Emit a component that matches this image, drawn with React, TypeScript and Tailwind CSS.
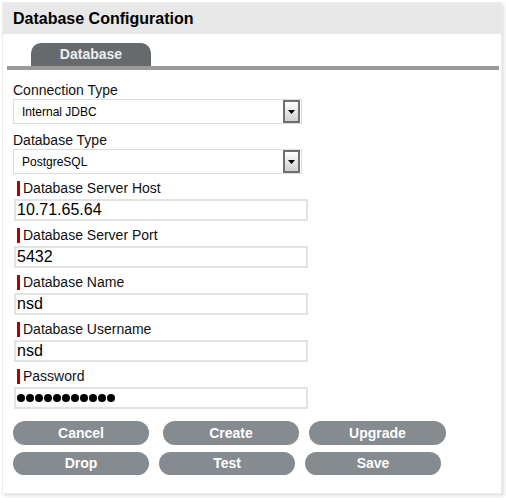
import React from 'react';

const font = { fontFamily: '"Liberation Sans", Arial, sans-serif' };

const SelectBox: React.FC<{ value: string }> = ({ value }) => (
  <div className="ml-[13px] flex h-[25px] w-[289px] items-center border border-[#dcdcdc] bg-white">
    <span className="flex-1 pl-[8px] text-[12px] text-black">{value}</span>
    <div className="mr-[1px] flex h-[23px] w-[17px] items-center justify-center border-2 border-[#6f6f6f] bg-gradient-to-b from-white to-[#cfcfcf]">
      <svg width="7" height="4" viewBox="0 0 7 4">
        <path d="M0 0h7L3.5 4z" fill="#000" />
      </svg>
    </div>
  </div>
);

const Field: React.FC<{ label: string; value: string; password?: boolean }> = ({ label, value, password }) => (
  <div className="pt-[7px]">
    <div className="ml-[17px] flex h-[14px] items-center">
      <span className="h-[15px] w-[3px] bg-[#b80000]" />
      <span className="ml-[3px] text-[14px] leading-[14px] text-[#111]">{label}</span>
    </div>
    <div className="ml-[14px] mt-[4px] flex h-[22px] w-[294px] items-center border-2 border-[#e3e3e3] bg-white pl-[1px]">
      {password ? (
        <span className="flex gap-[1px]">
          {Array.from({ length: 11 }).map((_, i) => (
            <span key={i} className="inline-block h-[8px] w-[8px] rounded-full bg-black" />
          ))}
        </span>
      ) : (
        <span className="text-[16px] leading-none text-black">{value}</span>
      )}
    </div>
  </div>
);

const Btn: React.FC<{ label: string; className?: string }> = ({ label, className = '' }) => (
  <button
    className={`flex w-[136px] items-center justify-center rounded-full bg-[#858b8f] text-[14px] font-bold text-white ${className}`}
  >
    {label}
  </button>
);

export default function App() {
  return (
    <div className="h-[498px] w-[506px] bg-white pl-[2px] pt-[2px]" style={font}>
      <div className="h-[492px] w-[500px] border border-[#ececec] bg-white shadow-[2px_2px_3px_rgba(0,0,0,0.12)]">
        <div className="flex h-[31px] items-center bg-[#e8e8e8] pl-[10px]">
          <h1 className="text-[16px] font-bold text-black">Database Configuration</h1>
        </div>

        <div className="mt-[9px] pl-[28px]">
          <div className="flex h-[23px] w-[120px] items-center justify-center rounded-t-[10px] bg-[#676a6d] text-[14px] font-bold text-[#eeeeee]">
            Database
          </div>
        </div>
        <div className="ml-[4px] mr-[2px] h-[4px] bg-[#9a9a9a]" />

        <div className="ml-[10px] mt-[12px] h-[17px] text-[14px] leading-[17px] text-[#111]">Connection Type</div>
        <div className="-ml-[3px]">
          <SelectBox value="Internal JDBC" />
        </div>
        <div className="ml-[10px] mt-[8px] h-[17px] text-[14px] leading-[17px] text-[#111]">Database Type</div>
        <div className="-ml-[3px]">
          <SelectBox value="PostgreSQL" />
        </div>

        <div className="-ml-[3px]">
          <Field label="Database Server Host" value="10.71.65.64" />
          <Field label="Database Server Port" value="5432" />
          <Field label="Database Name" value="nsd" />
          <Field label="Database Username" value="nsd" />
          <Field label="Password" value="" password />
        </div>

        <div className="ml-[10px] mt-[12px] flex h-[24px]">
          <Btn label="Cancel" />
          <Btn label="Create" className="ml-[14px]" />
          <Btn label="Upgrade" className="ml-[10px] w-[137px]" />
        </div>
        <div className="ml-[10px] mt-[7px] flex h-[23px]">
          <Btn label="Drop" />
          <Btn label="Test" className="ml-[10px]" />
          <Btn label="Save" className="ml-[10px]" />
        </div>
      </div>
    </div>
  );
}
